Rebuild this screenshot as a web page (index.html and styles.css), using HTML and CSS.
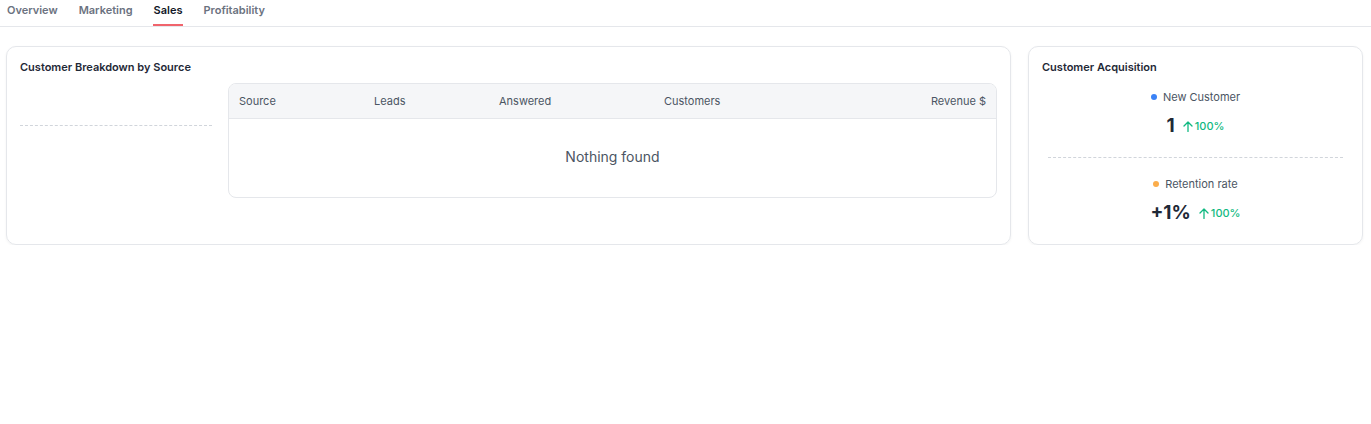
FILE: index.html
```html
<!DOCTYPE html>
<html lang="en">
<head>
    <meta charset="UTF-8">
    <title>Sales</title>
    <link rel="stylesheet" href="styles.css">
</head>
<body>
    <div class="tabs">
        <a class="tab">Overview</a>
        <a class="tab">Marketing</a>
        <a class="tab active">Sales</a>
        <a class="tab">Profitability</a>
    </div>

    <div class="main">
        <div class="card">
            <h3 class="card-title">Customer Breakdown by Source</h3>
            <div class="breakdown">
                <div class="chart">
                    <div class="dash"></div>
                </div>
                <div class="table">
                    <div class="table-head">
                        <span>Source</span>
                        <span>Leads</span>
                        <span>Answered</span>
                        <span>Customers</span>
                        <span class="right">Revenue $</span>
                    </div>
                    <div class="empty">Nothing found</div>
                </div>
            </div>
        </div>

        <div class="card">
            <h3 class="card-title">Customer Acquisition</h3>
            <div class="stat">
                <div class="stat-label"><span class="dot blue"></span>New Customer</div>
                <div class="stat-row">
                    <span class="stat-value">1</span>
                    <span class="trend">
                        <svg width="10" height="11" viewBox="0 0 10 11"><path d="M5 10.5V1M1 5l4-4 4 4" fill="none" stroke="currentColor" stroke-width="1.3" stroke-linecap="round" stroke-linejoin="round"/></svg>
                        100%
                    </span>
                </div>
            </div>
            <div class="dash wide"></div>
            <div class="stat">
                <div class="stat-label"><span class="dot orange"></span>Retention rate</div>
                <div class="stat-row">
                    <span class="stat-value">+1%</span>
                    <span class="trend">
                        <svg width="10" height="11" viewBox="0 0 10 11"><path d="M5 10.5V1M1 5l4-4 4 4" fill="none" stroke="currentColor" stroke-width="1.3" stroke-linecap="round" stroke-linejoin="round"/></svg>
                        100%
                    </span>
                </div>
            </div>
        </div>
    </div>
</body>
</html>
```

FILE: styles.css
```css
body {
    margin: 0;
    font-family: Inter, "Noto Sans", sans-serif;
    color: #1f2937;
    background: #fff;
}

/* tabs */
.tabs {
    display: flex;
    gap: 19px;
    padding: 0 0 0 6px;
    border-bottom: 1px solid #e5e7eb;
}
.tab {
    font-size: 11px;
    line-height: 14px;
    font-weight: 600;
    color: #6b7280;
    padding: 3px 1px 7px;
    border-bottom: 2px solid transparent;
}
.tab.active {
    color: #111827;
    border-bottom-color: #f0646c;
}

.main {
    display: grid;
    grid-template-columns: 3fr 1fr;
    gap: 17px;
    padding: 19px 8px 0 6px;
}

.card {
    border: 1px solid #e5e7eb;
    border-radius: 10px;
    padding: 13px 13px 19px;
    box-shadow: 0 1px 3px rgba(0, 0, 0, 0.05);
}
.card-title {
    margin: 0;
    font-size: 11px;
    line-height: 14px;
    font-weight: 600;
    color: #1f2937;
}

.breakdown {
    display: flex;
    gap: 16px;
    margin-top: 9px;
}
.chart {
    width: 192px;
    padding-top: 42px;
}
.dash {
    border-top: 1px dashed #d1d5db;
}
.dash.wide {
    margin: 19px 6px 19px;
}

.table {
    flex: 1;
    border: 1px solid #e5e7eb;
    border-radius: 8px;
    overflow: hidden;
}
.table-head {
    display: grid;
    grid-template-columns: 135px 125px 165px 1fr auto;
    align-items: center;
    height: 34px;
    padding: 0 10px;
    background: #f5f6f8;
    border-bottom: 1px solid #e5e7eb;
    font-size: 11px;
    color: #4b5563;
}
.right {
    text-align: right;
}
.empty {
    text-align: center;
    font-size: 14px;
    line-height: 18px;
    color: #4b5563;
    padding: 29px 0 31px;
}

/* acquisition */
.stat {
    display: flex;
    flex-direction: column;
    align-items: center;
}
.card-title + .stat {
    margin-top: 16px;
}
.stat-label {
    display: flex;
    align-items: center;
    gap: 6px;
    font-size: 11px;
    line-height: 14px;
    color: #4b5563;
}
.dot {
    width: 6px;
    height: 6px;
    border-radius: 50%;
}
.dot.blue { background: #3b82f6; }
.dot.orange { background: #fbad4b; }

.stat-row {
    display: flex;
    align-items: center;
    gap: 8px;
    margin-top: 10px;
}
.stat-value {
    font-size: 19px;
    line-height: 24px;
    font-weight: 700;
    color: #1f2937;
}
.trend {
    display: flex;
    align-items: center;
    gap: 2px;
    font-size: 11px;
    font-weight: 500;
    color: #10b981;
}
```
